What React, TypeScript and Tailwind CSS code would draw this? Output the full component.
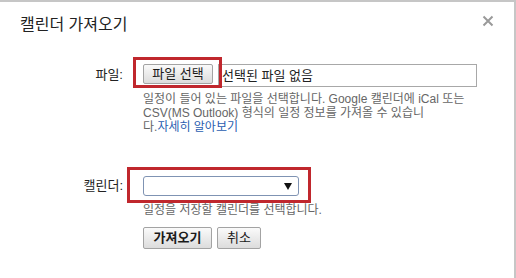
import React from "react";

function Btn({ children, bold, w }: { children: React.ReactNode; bold?: boolean; w: string }) {
  return (
    <div
      className={`${w} flex items-center justify-center border border-[#a3a3a3] rounded-[2px] bg-linear-to-b from-[#fafafa] to-[#dcdcdc] text-[#1a1a1a] text-[13px] ${bold ? "font-bold" : "font-normal"}`}
    >
      {children}
    </div>
  );
}

export default function App() {
  return (
    <div className="w-[516px] h-[278px] bg-white border-t-2 border-r-2 border-[#c6c6c6] font-['Liberation_Sans','Noto_Sans_CJK_KR',sans-serif] overflow-hidden">
      <div className="flex items-start justify-between pl-[20px] pr-[20px] pt-[12px]">
        <h1 className="text-[16px] leading-[22px] text-[#222]">캘린더 가져오기</h1>
        <svg width="12" height="12" viewBox="0 0 12 12" className="mt-[1px]">
          <path d="M1.5 1.5 L10.5 10.5 M10.5 1.5 L1.5 10.5" stroke="#9a9a9a" strokeWidth="2" />
        </svg>
      </div>

      <div className="grid grid-cols-[123px_1fr] gap-x-[20px] mt-[28px]">
        <div className="text-right text-[13px] leading-[22px] text-[#222]">파일:</div>
        <div className="flex flex-col">
          <div className="flex items-start gap-[5px] h-[23px]">
            <div className="relative">
              <Btn w="w-[70px] h-[20px]">파일 선택</Btn>
              <div className="absolute left-[-10px] top-[-7px] w-[89px] h-[31px] border-[3px] border-[#c0272d] z-10" />
            </div>
            <div className="w-[259px] h-[23px] border border-[#a8a8a8] pl-[3px] text-[13px] leading-[21px] text-[#222]">
              선택된 파일 없음
            </div>
          </div>
          <div className="mt-[5px] text-[12px] leading-[14px] text-[#666] whitespace-nowrap">
            일정이 들어 있는 파일을 선택합니다. Google 캘린더에 iCal 또는
            <br />
            CSV(MS Outlook) 형식의 일정 정보를 가져올 수 있습니
            <br />
            다.<span className="text-[#2a5db0]">자세히 알아보기</span>
          </div>
        </div>

        <div className="text-right text-[13px] leading-[20px] text-[#222] mt-[42px]">캘린더:</div>
        <div className="flex flex-col mt-[42px]">
          <div className="relative w-[156px] h-[20px]">
            <div className="w-[156px] h-[20px] border border-[#7f93b3] rounded-[3px] bg-white flex items-center justify-end pr-[6px]">
              <svg width="8" height="7" viewBox="0 0 8 7">
                <path d="M0 0 L8 0 L4 7 Z" fill="#111" />
              </svg>
            </div>
            <div className="absolute left-[-16px] top-[-9px] w-[184px] h-[36px] border-[3px] border-[#c0272d]" />
          </div>
          <div className="mt-[7px] text-[12px] leading-[14px] text-[#666] whitespace-nowrap">
            일정을 저장할 캘린더를 선택합니다.
          </div>
          <div className="mt-[10px] flex gap-[5px]">
            <Btn bold w="w-[69px] h-[22px]">가져오기</Btn>
            <Btn w="w-[44px] h-[22px]">취소</Btn>
          </div>
        </div>
      </div>
    </div>
  );
}
